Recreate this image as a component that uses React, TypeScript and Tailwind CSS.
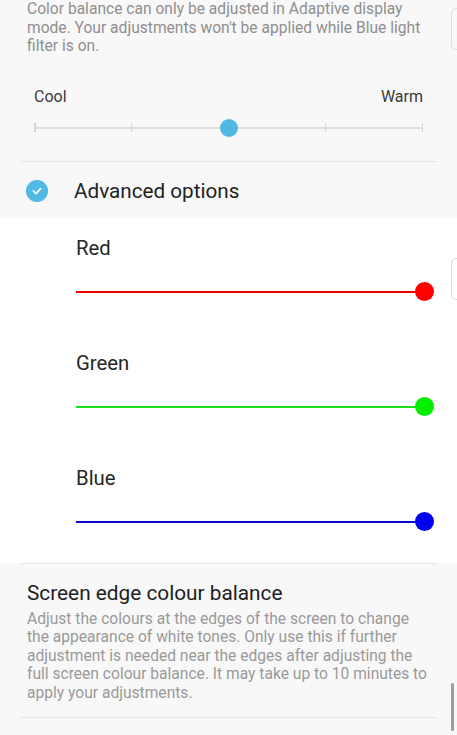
const rows = [
  { name: "Red", color: "bg-[#f20000]", thumb: "bg-[#ff0000]" },
  { name: "Green", color: "bg-[#19e319]", thumb: "bg-[#00f000]" },
  { name: "Blue", color: "bg-[#0a0ac8]", thumb: "bg-[#0000f0]" },
];

const ColorSlider = ({ name, color, thumb }: { name: string; color: string; thumb: string }) => {
  return (
    <div className="h-[115px] pt-[18px] pl-[76px]">
      <div className="text-[20.3px] leading-[24px] text-[#262626]">{name}</div>
      <div className="relative mt-[22px] h-[20px] w-[348px] flex items-center">
        <div className={`h-[2px] w-full ${color}`} />
        <div className={`absolute right-[-9.5px] top-[0.5px] h-[19px] w-[19px] rounded-full ${thumb}`} />
      </div>
    </div>
  );
};

export default function App() {
  return (
    <div
      className="relative h-[735px] w-full overflow-hidden bg-[#f8f8f8]"
      style={{ fontFamily: "Roboto, 'Noto Sans', sans-serif" }}
    >
      {/* top: cool / warm */}
      <div className="px-[27px] text-[15.6px] leading-[18.5px] text-[#8f8f8f]">
        Color balance can only be adjusted in Adaptive display mode. Your adjustments won't be applied while Blue light
        filter is on.
      </div>
      <div className="mt-[31px] flex justify-between px-[34px] text-[16px] leading-[20px] text-[#3a3a3a]">
        <span>Cool</span>
        <span>Warm</span>
      </div>
      <div className="relative mx-[34px] mt-[11px] h-[20px] flex items-center">
        <div className="h-[2px] w-full bg-[#dedede]" />
        <div className="absolute inset-0 flex items-center justify-between">
          {[0, 1, 2, 3, 4].map((i) => (
            <div key={i} className="h-[9px] w-[1.5px] bg-[#d6d6d6]" />
          ))}
        </div>
        <div className="absolute left-1/2 top-[1px] ml-[-9px] h-[18px] w-[18px] rounded-full bg-[#4fb9e6]" />
      </div>
      <div className="mx-[20px] mt-[23px] h-px bg-[#e6e6e6]" />

      {/* advanced options */}
      <div className="flex h-[56px] items-center pl-[26px] pt-[2px]">
        <div className="flex h-[22px] w-[22px] items-center justify-center rounded-full bg-[#50b9e6]">
          <svg width="12" height="12" viewBox="0 0 12 12" fill="none">
            <path d="M2.5 6.2 L5 8.6 L9.6 3.6" stroke="white" strokeWidth="1.8" strokeLinecap="round" strokeLinejoin="round" />
          </svg>
        </div>
        <span className="ml-[26px] text-[20.7px] leading-[26px] text-[#222]">Advanced options</span>
      </div>

      <div className="bg-white">
        {rows.map((r) => (
          <ColorSlider key={r.name} {...r} />
        ))}
      </div>
      <div className="mx-[20px] h-px bg-[#e6e6e6]" />

      {/* screen edge */}
      <div className="px-[27px] pt-[16px]">
        <div className="text-[20.8px] leading-[26px] text-[#1e1e1e]">Screen edge colour balance</div>
        <div className="mt-[4px] text-[15.6px] leading-[18.5px] text-[#9a9a9a]">
          Adjust the colours at the edges of the screen to change the appearance of white tones. Only use this if further
          adjustment is needed near the edges after adjusting the full screen colour balance. It may take up to 10 minutes
          to apply your adjustments.
        </div>
      </div>
      <div className="mx-[20px] mt-[15px] h-px bg-[#e6e6e6]" />

      {/* edge handles + scrollbar */}
      <div className="absolute left-[451px] top-[8px] h-[42px] w-[10px] rounded-l-[5px] border border-[#dcdcdc]" />
      <div className="absolute left-[451px] top-[258px] h-[42px] w-[10px] rounded-l-[5px] border border-[#dcdcdc]" />
      <div className="absolute left-[451px] top-[683px] h-[48px] w-[3px] rounded-full bg-[#9c9c9c]" />
    </div>
  );
}
